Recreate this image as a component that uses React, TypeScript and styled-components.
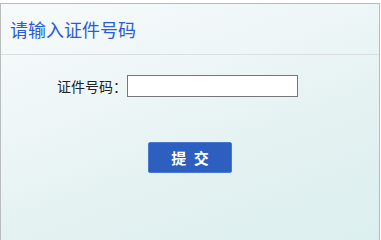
import styled, { createGlobalStyle } from 'styled-components'

const GlobalStyle = createGlobalStyle`
  html, body {
    margin: 0;
    padding: 0;
    background: #ffffff;
    overflow: hidden;
  }
  #root {
    padding-top: 3px;
  }
`

const Panel = styled.div`
  box-sizing: border-box;
  width: 380px;
  height: 240px;
  border: 1px solid #b9bcbd;
  border-bottom: none;
  background: linear-gradient(160deg, #f7fafb 0%, #eef6f7 35%, #e3f1f1 65%, #dcefef 100%);
  font-family: 'Noto Sans CJK SC', 'Noto Sans', sans-serif;
`

const Header = styled.div`
  display: flex;
  align-items: center;
  height: 50px;
  padding-left: 9px;
  border-bottom: 1px solid #dcdfe0;
`

const Title = styled.h2`
  margin: 0;
  font-size: 18px;
  font-weight: 400;
  color: #2a5cd6;
`

const Form = styled.form`
  display: flex;
  flex-direction: column;
  padding-top: 20px;
`

const Row = styled.div`
  display: flex;
  align-items: center;
  padding-left: 56px;
`

const Label = styled.label`
  width: 70px;
  font-size: 14px;
  color: #222;
  white-space: nowrap;
`

const Input = styled.input`
  box-sizing: border-box;
  width: 171px;
  height: 22px;
  margin: 0;
  border: 1px solid #777;
  background: #fff;
  outline: none;
`

const Actions = styled.div`
  display: flex;
  justify-content: center;
  padding-top: 45px;
`

const SubmitButton = styled.button`
  box-sizing: border-box;
  width: 84px;
  height: 31px;
  border: 1px solid #4a78cf;
  border-radius: 2px;
  background: #2c5fbf;
  color: #fff;
  font-family: 'Noto Sans CJK SC', sans-serif;
  font-size: 15px;
  font-weight: 700;
  letter-spacing: 2px;
  padding: 0 0 0 2px;
  cursor: pointer;
`

export default function App() {
  return (
    <>
      <GlobalStyle />
      <Panel>
        <Header>
          <Title>请输入证件号码</Title>
        </Header>
        <Form onSubmit={(e) => e.preventDefault()}>
          <Row>
            <Label htmlFor="cert">证件号码：</Label>
            <Input id="cert" type="text" />
          </Row>
          <Actions>
            <SubmitButton type="submit">提 交</SubmitButton>
          </Actions>
        </Form>
      </Panel>
    </>
  )
}
